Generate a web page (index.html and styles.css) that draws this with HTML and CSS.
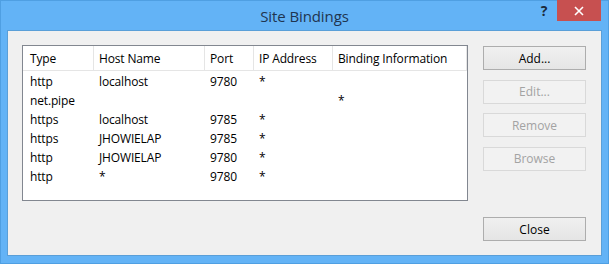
FILE: index.html
```html
<!DOCTYPE html>
<html lang="en">
<head>
    <meta charset="UTF-8">
    <meta name="viewport" content="width=device-width, initial-scale=1.0">
    <title>Site Bindings</title>
    <link rel="stylesheet" href="styles.css">
</head>
<body>
    <div class="window">
        <div class="titlebar">
            <span class="title">Site Bindings</span>
            <div class="controls">
                <span class="help">?</span>
                <span class="close">
                    <svg width="10" height="10" viewBox="0 0 10 10">
                        <path d="M1 1 L9 9 M9 1 L1 9" stroke="#fff" stroke-width="1.6" fill="none"/>
                    </svg>
                </span>
            </div>
        </div>

        <div class="client">
            <!-- bindings list -->
            <div class="list">
                <div class="row header">
                    <div class="cell">Type</div>
                    <div class="cell">Host Name</div>
                    <div class="cell">Port</div>
                    <div class="cell">IP Address</div>
                    <div class="cell">Binding Information</div>
                </div>
                <div class="row">
                    <div class="cell">http</div>
                    <div class="cell">localhost</div>
                    <div class="cell">9780</div>
                    <div class="cell">*</div>
                    <div class="cell"></div>
                </div>
                <div class="row">
                    <div class="cell">net.pipe</div>
                    <div class="cell"></div>
                    <div class="cell"></div>
                    <div class="cell"></div>
                    <div class="cell">*</div>
                </div>
                <div class="row">
                    <div class="cell">https</div>
                    <div class="cell">localhost</div>
                    <div class="cell">9785</div>
                    <div class="cell">*</div>
                    <div class="cell"></div>
                </div>
                <div class="row">
                    <div class="cell">https</div>
                    <div class="cell">JHOWIELAP</div>
                    <div class="cell">9785</div>
                    <div class="cell">*</div>
                    <div class="cell"></div>
                </div>
                <div class="row">
                    <div class="cell">http</div>
                    <div class="cell">JHOWIELAP</div>
                    <div class="cell">9780</div>
                    <div class="cell">*</div>
                    <div class="cell"></div>
                </div>
                <div class="row">
                    <div class="cell">http</div>
                    <div class="cell">*</div>
                    <div class="cell">9780</div>
                    <div class="cell">*</div>
                    <div class="cell"></div>
                </div>
            </div>

            <div class="buttons">
                <button type="button" class="btn">Add...</button>
                <button type="button" class="btn" disabled>Edit...</button>
                <button type="button" class="btn" disabled>Remove</button>
                <button type="button" class="btn" disabled>Browse</button>
                <button type="button" class="btn btn-close">Close</button>
            </div>
        </div>
    </div>
</body>
</html>
```

FILE: styles.css
```css
body {
    margin: 0;
    font-family: "Open Sans", "Noto Sans", sans-serif;
    font-size: 12px;
    color: #000;
}

.window {
    width: 609px;
    height: 264px;
    background-color: #63b3f6;
    box-shadow: inset 0 0 0 1px #4f9fe2;
}

.titlebar {
    height: 31px;
    display: grid;
    grid-template-columns: 1fr auto 1fr;
}

.title {
    grid-column: 2;
    line-height: 32px;
    font-size: 15px;
    color: #1f3550;
    letter-spacing: -0.1px;
}

.controls {
    grid-column: 3;
    justify-self: end;
    display: flex;
    padding-right: 8px;
}

.help {
    width: 26px;
    height: 21px;
    display: flex;
    align-items: center;
    justify-content: center;
    font-weight: bold;
    font-size: 14px;
    color: #1c2a3a;
}

.close {
    width: 44px;
    height: 21px;
    background-color: #c75050;
    display: flex;
    align-items: center;
    justify-content: center;
}

.client {
    margin: 0 8px;
    height: 224px;
    box-sizing: border-box;
    padding: 14px 15px 14px 14px;
    background-color: #f0f0f0;
    box-shadow: 0 0 0 1px #5a9fd8;
    display: flex;
    gap: 15px;
}

.list {
    width: 446px;
    height: 156px;
    box-sizing: border-box;
    border: 1px solid #828790;
    background-color: #fff;
    letter-spacing: -0.15px;
}

.row {
    display: grid;
    grid-template-columns: 71px 111px 49px 79px 1fr;
    height: 19px;
    line-height: 21px;
}

.row .cell {
    padding-left: 5px;
    white-space: nowrap;
    overflow: hidden;
}

.row .cell:first-child {
    padding-left: 7px;
}

.row.header {
    height: 25px;
    line-height: 26px;
    border-bottom: 1px solid #e5e5e5;
    box-sizing: border-box;
}

.row.header .cell {
    border-right: 1px solid #e5e5e5;
}

.buttons {
    width: 103px;
    display: flex;
    flex-direction: column;
    gap: 9.5px;
    padding-top: 1px;
}

.btn {
    height: 24px;
    margin: 0;
    padding: 0;
    font-family: inherit;
    font-size: 12px;
    color: #000;
    border: 1px solid #adadad;
    background: linear-gradient(#f0f0f0, #e5e5e5);
}

.btn:disabled {
    color: #a3a3a3;
    border-color: #d9d9d9;
    background: #f2f2f2;
}

.btn-close {
    margin-top: auto;
}
```
